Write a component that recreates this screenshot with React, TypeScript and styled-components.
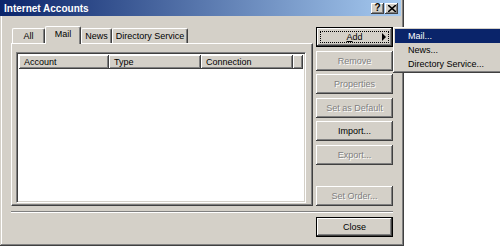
import React from "react";
import styled, { createGlobalStyle, css } from "styled-components";

const GlobalStyle = createGlobalStyle`
  html, body {
    margin: 0;
    padding: 0;
    background: #ffffff;
  }
  body {
    font-family: "Liberation Sans", Arial, sans-serif;
    font-size: 9px;
    color: #000000;
  }
`;

const raised = css`
  box-shadow: inset -1px -1px #404040, inset 1px 1px #ffffff,
    inset -2px -2px #808080, inset 2px 2px #d4d0c8;
`;

const Stage = styled.div`
  position: relative;
  width: 500px;
  height: 247px;
  overflow: hidden;
`;

const Window = styled.div`
  width: 404px;
  height: 246px;
  box-sizing: border-box;
  background: #d4d0c8;
  box-shadow: inset -1px -1px #404040, inset 1px 0 #d4d0c8,
    inset -2px -2px #808080, inset 2px 0 #ffffff;
  display: flex;
  flex-direction: column;
`;

const TitleBar = styled.div`
  width: 401px;
  height: 16px;
  box-sizing: border-box;
  padding: 0 3px 0 4px;
  background: linear-gradient(to right, #0a246a, #a6caf0);
  display: flex;
  align-items: center;
  justify-content: space-between;
`;

const Title = styled.span`
  color: #ffffff;
  font-weight: bold;
  font-size: 10px;
`;

const TitleButtons = styled.div`
  display: flex;
  gap: 1px;
`;

const TitleButton = styled.div`
  width: 13px;
  height: 11px;
  background: #d4d0c8;
  ${raised};
  display: flex;
  align-items: center;
  justify-content: center;
  font-weight: bold;
  font-size: 10px;
  line-height: 1;
`;

const Body = styled.div`
  flex: 1;
  display: flex;
  flex-direction: column;
  padding: 10px 11px 0 11px;
`;

const Main = styled.div`
  display: flex;
  gap: 3px;
`;

const LeftColumn = styled.div`
  width: 302px;
  display: flex;
  flex-direction: column;
`;

const TabRow = styled.div`
  display: flex;
  align-items: flex-end;
  height: 17px;
  padding-left: 1px;
  position: relative;
  z-index: 1;
`;

const Tab = styled.div<{ $w: number; $active?: boolean }>`
  width: ${(p) => p.$w}px;
  height: ${(p) => (p.$active ? 18 : 15)}px;
  margin-bottom: ${(p) => (p.$active ? -1 : 0)}px;
  box-sizing: border-box;
  background: #d4d0c8;
  border-top: 1px solid #ffffff;
  border-left: 1px solid #ffffff;
  border-right: 1px solid #404040;
  border-radius: 2px 2px 0 0;
  box-shadow: inset -1px 0 #808080;
  display: flex;
  align-items: center;
  justify-content: center;
  padding-bottom: ${(p) => (p.$active ? 3 : 0)}px;
`;

const Panel = styled.div`
  height: 163px;
  box-sizing: border-box;
  border-top: 1px solid #ffffff;
  border-left: 1px solid #ffffff;
  border-right: 1px solid #404040;
  border-bottom: 1px solid #404040;
  box-shadow: inset -1px -1px #808080;
  padding: 8px 6px 2px 4px;
  display: flex;
`;

const ListView = styled.div`
  flex: 1;
  box-sizing: border-box;
  background: #ffffff;
  border-top: 1px solid #808080;
  border-left: 1px solid #808080;
  border-right: 1px solid #ffffff;
  border-bottom: 1px solid #ffffff;
  box-shadow: inset 1px 1px #404040, inset -1px -1px #d4d0c8;
  padding: 2px;
`;

const HeaderRow = styled.div`
  display: flex;
  height: 14px;
`;

const HeaderCell = styled.div<{ $w?: number }>`
  ${(p) => (p.$w ? `width: ${p.$w}px;` : "flex: 1;")}
  box-sizing: border-box;
  background: #d4d0c8;
  box-shadow: inset -1px -1px #404040, inset 1px 1px #ffffff,
    inset -2px -2px #808080;
  padding-left: 5px;
  display: flex;
  align-items: center;
`;

const ButtonColumn = styled.div`
  width: 77px;
  display: flex;
  flex-direction: column;
  gap: 3.5px;
  padding-top: 1px;
`;

const Spacer = styled.div`
  flex: 1;
`;

const Button = styled.div<{ $disabled?: boolean; $default?: boolean }>`
  position: relative;
  height: 20px;
  box-sizing: border-box;
  background: #d4d0c8;
  display: flex;
  align-items: center;
  justify-content: center;
  color: ${(p) => (p.$disabled ? "#808080" : "#000000")};
  text-shadow: ${(p) => (p.$disabled ? "1px 1px 0 #ffffff" : "none")};
  ${(p) =>
    p.$default
      ? `border: 1px solid #000000;
         box-shadow: inset -1px -1px #404040, inset 1px 1px #ffffff,
           inset -2px -2px #808080;`
      : `box-shadow: inset -1px -1px #404040, inset 1px 1px #ffffff,
           inset -2px -2px #808080, inset 2px 2px #d4d0c8;`}
`;

const FocusRect = styled.div`
  position: absolute;
  inset: 3px;
  border: 1px dotted #000000;
  pointer-events: none;
`;

const Arrow = styled.div`
  position: absolute;
  right: 6px;
  top: 50%;
  margin-top: -4px;
  width: 0;
  height: 0;
  border-top: 4px solid transparent;
  border-bottom: 4px solid transparent;
  border-left: 4px solid #000000;
`;

const Separator = styled.div`
  margin-top: 5px;
  height: 0;
  border-top: 1px solid #808080;
  border-bottom: 1px solid #ffffff;
`;

const Footer = styled.div`
  display: flex;
  justify-content: flex-end;
  padding-top: 4px;
`;

const CloseButton = styled(Button)`
  width: 77px;
`;

const Menu = styled.div`
  position: absolute;
  left: 393px;
  top: 27px;
  width: 130px;
  padding: 2px;
  box-sizing: border-box;
  background: #d4d0c8;
  ${raised};
`;

const MenuItem = styled.div<{ $active?: boolean }>`
  height: 14px;
  padding-left: 13px;
  display: flex;
  align-items: center;
  background: ${(p) => (p.$active ? "#0a246a" : "transparent")};
  color: ${(p) => (p.$active ? "#ffffff" : "#000000")};
`;

const tabs = [
  { label: "All", w: 33 },
  { label: "Mail", w: 36, active: true },
  { label: "News", w: 31 },
  { label: "Directory Service", w: 76 },
];

const actions = [
  { label: "Remove", disabled: true },
  { label: "Properties", disabled: true },
  { label: "Set as Default", disabled: true },
  { label: "Import...", disabled: false },
  { label: "Export...", disabled: true },
];

const CloseGlyph = () => (
  <svg width="8" height="7" viewBox="0 0 8 7">
    <path d="M0 0 L8 7 M8 0 L0 7" stroke="#000" strokeWidth="1.6" />
  </svg>
);

const App = () => (
  <Stage>
    <GlobalStyle />
    <Window>
      <TitleBar>
        <Title>Internet Accounts</Title>
        <TitleButtons>
          <TitleButton>?</TitleButton>
          <TitleButton>
            <CloseGlyph />
          </TitleButton>
        </TitleButtons>
      </TitleBar>
      <Body>
        <Main>
          <LeftColumn>
            <TabRow>
              {tabs.map((t) => (
                <Tab key={t.label} $w={t.w} $active={t.active}>
                  {t.label}
                </Tab>
              ))}
            </TabRow>
            <Panel>
              <ListView>
                <HeaderRow>
                  <HeaderCell $w={90}>Account</HeaderCell>
                  <HeaderCell $w={92}>Type</HeaderCell>
                  <HeaderCell $w={92}>Connection</HeaderCell>
                  <HeaderCell />
                </HeaderRow>
              </ListView>
            </Panel>
          </LeftColumn>
          <ButtonColumn>
            <Button $default>
              <span>
                <u>A</u>dd
              </span>
              <FocusRect />
              <Arrow />
            </Button>
            {actions.map((a) => (
              <Button key={a.label} $disabled={a.disabled}>
                {a.label}
              </Button>
            ))}
            <Spacer />
            <Button $disabled>Set Order...</Button>
          </ButtonColumn>
        </Main>
        <Separator />
        <Footer>
          <CloseButton $default>Close</CloseButton>
        </Footer>
      </Body>
    </Window>
    <Menu>
      <MenuItem $active>Mail...</MenuItem>
      <MenuItem>News...</MenuItem>
      <MenuItem>Directory Service...</MenuItem>
    </Menu>
  </Stage>
);

export default App;
